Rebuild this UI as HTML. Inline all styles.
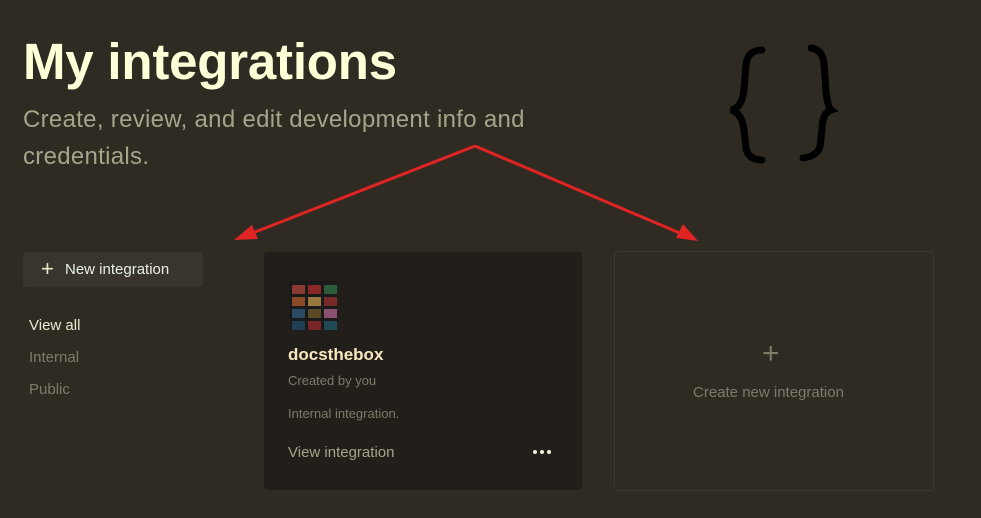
<!DOCTYPE html>
<html><head><meta charset="utf-8"><style>
*{margin:0;padding:0;box-sizing:border-box}
body{width:981px;height:518px;background:#2f2b23;font-family:"Liberation Sans",sans-serif;position:relative;overflow:hidden}
.a{position:absolute;white-space:nowrap}
</style></head><body>
<div class="a" style="left:23px;top:32px;font-size:51px;font-weight:bold;color:#ffffd8;letter-spacing:-0.2px">My integrations</div>
<div class="a" style="left:23px;top:101px;font-size:24px;line-height:37px;color:#a7a38b;letter-spacing:0.3px">Create, review, and edit development info and<br>credentials.</div>

<svg class="a" style="left:0;top:0" width="981" height="518">
<path d="M762 50 Q748 50 746 64 L744 90 Q742 108 731 110 Q742 113 744 130 L746 148 Q748 160 762 160" fill="none" stroke="#000" stroke-width="7" stroke-linecap="round"/>
<path d="M811 48 Q823 50 824 64 L826 92 Q828 108 831 110 Q822 113 822 130 L820 146 Q818 156 803 158" fill="none" stroke="#000" stroke-width="7" stroke-linecap="round"/>
<line x1="475" y1="146" x2="250" y2="234" stroke="#e02424" stroke-width="3"/>
<polygon points="234,240 252,225 258,239" fill="#e02424"/>
<line x1="475" y1="146" x2="682" y2="234" stroke="#e02424" stroke-width="3"/>
<polygon points="698,241 676,238 683,224" fill="#e02424"/>
</svg>

<div class="a" style="left:23px;top:252px;width:180px;height:35px;background:#3a352c;border-radius:3px"></div>
<div class="a" style="left:41px;top:258px;font-size:22px;color:#e8e4cc;line-height:22px">+</div>
<div class="a" style="left:65px;top:261px;font-size:15px;color:#e6f0e8">New integration</div>
<div class="a" style="left:29px;top:317px;font-size:15px;color:#ece8d0">View all</div>
<div class="a" style="left:29px;top:349px;font-size:15px;color:#7f7a68">Internal</div>
<div class="a" style="left:29px;top:381px;font-size:15px;color:#7f7a68">Public</div>

<div class="a" style="left:264px;top:252px;width:318px;height:238px;background:#221e19;border-radius:4px"></div>
<div class="a" style="left:289px;top:281px;width:48px;height:49px;background:#1a1a1a;border-radius:3px;display:grid;grid-template-columns:repeat(3,13px);gap:3px;padding:4px 3px 0">
<div style="background:#8a3a30;height:9px"></div><div style="background:#8a2828;height:9px"></div><div style="background:#2c5a3a;height:9px"></div>
<div style="background:#8a4a28;height:9px"></div><div style="background:#9a7840;height:9px"></div><div style="background:#782a2a;height:9px"></div>
<div style="background:#2a4a62;height:9px"></div><div style="background:#5a4a28;height:9px"></div><div style="background:#8a5070;height:9px"></div>
<div style="background:#203e56;height:9px"></div><div style="background:#782626;height:9px"></div><div style="background:#204a56;height:9px"></div>
</div>
<div class="a" style="left:288px;top:345px;font-size:17px;font-weight:bold;color:#f8e8c0">docsthebox</div>
<div class="a" style="left:288px;top:373px;font-size:13px;color:#7f7a68">Created by you</div>
<div class="a" style="left:288px;top:406px;font-size:13px;color:#7f7a68">Internal integration.</div>
<div class="a" style="left:288px;top:444px;font-size:15px;color:#a7a38b">View integration</div>
<div class="a" style="left:533px;top:450px;width:4px;height:4px;border-radius:50%;background:#f0ecd8;box-shadow:7px 0 #f0ecd8,14px 0 #f0ecd8"></div>

<div class="a" style="left:614px;top:251px;width:320px;height:240px;border:1px solid #3d382f;border-radius:4px"></div>
<div class="a" style="left:762px;top:339px;font-size:30px;font-weight:300;color:#7f7a68;line-height:30px">+</div>
<div class="a" style="left:693px;top:384px;font-size:15px;color:#7f7a68">Create new integration</div>
</body></html>
